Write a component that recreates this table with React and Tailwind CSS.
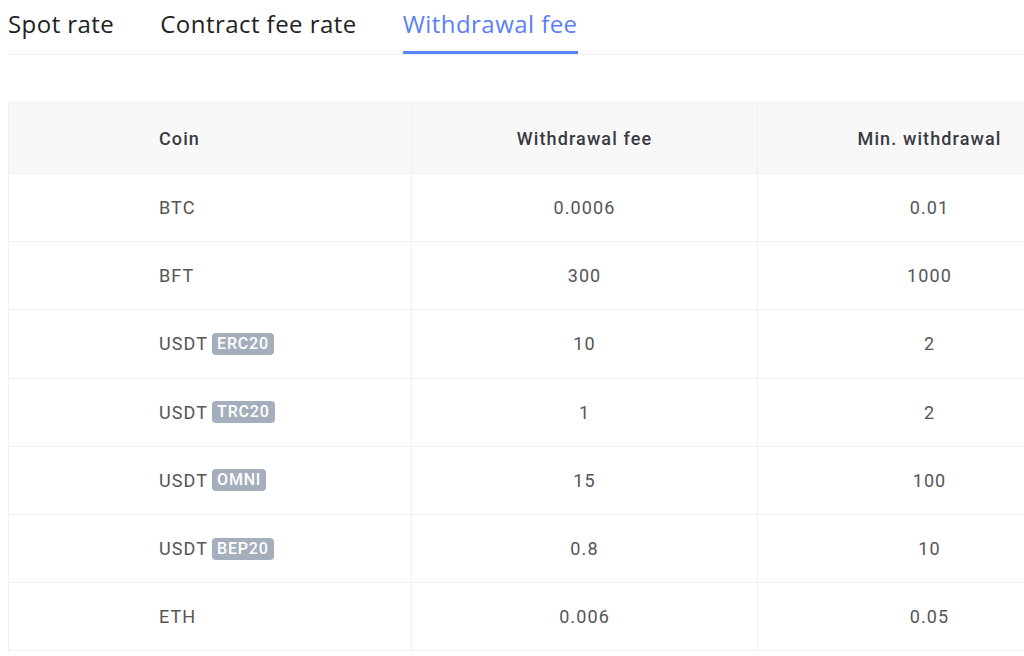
import React, { useState } from "react";

const rows = [
  { coin: "BTC", fee: "0.0006", min: "0.01" },
  { coin: "BFT", fee: "300", min: "1000" },
  { coin: "USDT", tag: "ERC20", fee: "10", min: "2" },
  { coin: "USDT", tag: "TRC20", fee: "1", min: "2" },
  { coin: "USDT", tag: "OMNI", fee: "15", min: "100" },
  { coin: "USDT", tag: "BEP20", fee: "0.8", min: "10" },
  { coin: "ETH", fee: "0.006", min: "0.05" },
];

const tabs = ["Spot rate", "Contract fee rate", "Withdrawal fee"];

const App = () => {
  const [active, setActive] = useState(2);

  return (
    <div className="w-[1024px] h-[656px] overflow-hidden bg-white">
      {/* tabs */}
      <div className="ml-2 flex gap-[46px] border-b border-[#f0f0f0] h-[55px] font-['Open_Sans',sans-serif]">
        {tabs.map((t, i) => (
          <div
            key={t}
            onClick={() => setActive(i)}
            className={`cursor-pointer pt-[6px] text-[24px] leading-[36px] tracking-[0.45px] ${
              active === i
                ? "text-[#5b7ff7] border-b-[3px] border-[#5b85f8] h-[54px]"
                : "text-[#222]"
            }`}
          >
            {t}
          </div>
        ))}
      </div>

      {/* table */}
      <div className="ml-2 mt-[47px] w-[1100px] border-t border-l border-b border-[#f0f0f0] font-['Roboto',sans-serif] tracking-[1.1px]">
        <div className="grid grid-cols-[403px_346px_343px] h-[70px] bg-[#f8f8f8] text-[18px] font-medium text-[#3a3a44] items-center">
          <div className="pl-[150px] h-full flex items-center border-r border-[#f0f0f0]">Coin</div>
          <div className="text-center h-full flex items-center justify-center border-r border-[#f0f0f0]">
            Withdrawal fee
          </div>
          <div className="text-center">Min. withdrawal</div>
        </div>
        {rows.map((r, i) => (
          <div
            key={i}
            className="grid grid-cols-[403px_346px_343px] h-[68.2px] border-t border-[#f0f0f0] text-[18px] text-[#555] items-center"
          >
            <div className="pl-[150px] h-full flex items-center gap-[4px] border-r border-[#f0f0f0]">
              {r.coin}
              {r.tag ? (
                <span className="bg-[#a5aebd] text-white text-[16px] font-medium leading-[22px] px-[5px] rounded-[4px] tracking-[0.8px]">
                  {r.tag}
                </span>
              ) : null}
            </div>
            <div className="h-full flex items-center justify-center border-r border-[#f0f0f0]">{r.fee}</div>
            <div className="text-center">{r.min}</div>
          </div>
        ))}
      </div>
    </div>
  );
};

export default App;
